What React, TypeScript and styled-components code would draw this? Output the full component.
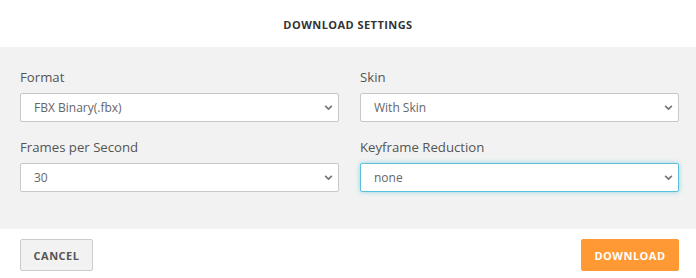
import styled, { createGlobalStyle } from "styled-components";

const GlobalStyle = createGlobalStyle`
  * { box-sizing: border-box; }
  body {
    margin: 0;
    background: #ffffff;
    font-family: "Open Sans", "Noto Sans", sans-serif;
  }
`;

const Dialog = styled.div`
  width: 696px;
  height: 278px;
  display: flex;
  flex-direction: column;
  background: #ffffff;
`;

const Header = styled.div`
  height: 47px;
  display: flex;
  align-items: center;
  justify-content: center;
`;

const Title = styled.h1`
  margin: 0;
  font-size: 11px;
  font-weight: 700;
  letter-spacing: 0.45px;
  color: #333333;
  text-transform: uppercase;
  padding-top: 1px;
`;

const Body = styled.div`
  height: 182px;
  background: #f2f2f2;
  padding: 21px 17px 0 20px;
  display: grid;
  grid-template-columns: 319px 319px;
  column-gap: 21px;
  row-gap: 16px;
  align-content: start;
`;

const Field = styled.div`
  display: flex;
  flex-direction: column;
  gap: 7px;
`;

const Label = styled.label`
  font-size: 13.2px;
  line-height: 18px;
  color: #555555;
`;

const Chevron = (color: string) =>
  `url("data:image/svg+xml,%3Csvg xmlns='http://www.w3.org/2000/svg' width='10' height='6' viewBox='0 0 10 6'%3E%3Cpath d='M1 1l4 4 4-4' fill='none' stroke='${color}' stroke-width='2'/%3E%3C/svg%3E")`;

const Select = styled.select<{ $focused?: boolean }>`
  appearance: none;
  width: 100%;
  height: 29px;
  padding: 0 24px 0 13px;
  font-family: "Open Sans", "Noto Sans", sans-serif;
  font-size: 12px;
  color: #666666;
  background: #ffffff ${Chevron("%23777777")} no-repeat right 5px center;
  background-size: 9px 5px;
  border: 1px solid ${(p) => (p.$focused ? "#5bc0de" : "#c8c8c8")};
  border-radius: 2px;
  box-shadow: ${(p) => (p.$focused ? "0 0 5px rgba(91, 192, 222, 0.6)" : "none")};
  outline: none;
`;

const Footer = styled.div`
  flex: 1;
  display: flex;
  justify-content: space-between;
  align-items: flex-start;
  padding: 10px 17px 0 20px;
`;

const Button = styled.button<{ $primary?: boolean }>`
  height: 32px;
  padding: 0 10px;
  font-family: "Open Sans", "Noto Sans", sans-serif;
  font-size: 11px;
  font-weight: 700;
  letter-spacing: 0.5px;
  text-transform: uppercase;
  border-radius: 2px;
  cursor: pointer;
  color: ${(p) => (p.$primary ? "#ffffff" : "#555555")};
  background: ${(p) => (p.$primary ? "#ff9933" : "#f2f2f2")};
  border: 1px solid ${(p) => (p.$primary ? "#ff9933" : "#cccccc")};
  width: ${(p) => (p.$primary ? "98px" : "73px")};
`;

const App = () => {
  return (
    <Dialog>
      <GlobalStyle />
      <Header>
        <Title>Download Settings</Title>
      </Header>
      <Body>
        <Field>
          <Label>Format</Label>
          <Select defaultValue="fbx">
            <option value="fbx">FBX Binary(.fbx)</option>
          </Select>
        </Field>
        <Field>
          <Label>Skin</Label>
          <Select defaultValue="with">
            <option value="with">With Skin</option>
          </Select>
        </Field>
        <Field>
          <Label>Frames per Second</Label>
          <Select defaultValue="30">
            <option value="30">30</option>
          </Select>
        </Field>
        <Field>
          <Label>Keyframe Reduction</Label>
          <Select defaultValue="none" $focused>
            <option value="none">none</option>
          </Select>
        </Field>
      </Body>
      <Footer>
        <Button>Cancel</Button>
        <Button $primary>Download</Button>
      </Footer>
    </Dialog>
  );
};

export default App;
